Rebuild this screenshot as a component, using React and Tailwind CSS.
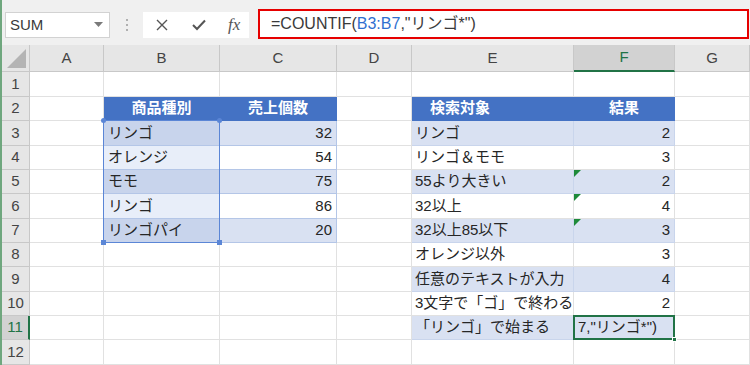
import React from 'react'

const COLS = ['A', 'B', 'C', 'D', 'E', 'F', 'G']
const ROWS = [1, 2, 3, 4, 5, 6, 7, 8, 9, 10, 11, 12]

const left = {
  3: ['リンゴ', '32'],
  4: ['オレンジ', '54'],
  5: ['モモ', '75'],
  6: ['リンゴ', '86'],
  7: ['リンゴパイ', '20'],
}

const right = {
  3: ['リンゴ', '2'],
  4: ['リンゴ＆モモ', '3'],
  5: ['55より大きい', '2'],
  6: ['32以上', '4'],
  7: ['32以上85以下', '3'],
  8: ['オレンジ以外', '3'],
  9: ['任意のテキストが入力', '4'],
  10: ['3文字で「ゴ」で終わる', '2'],
  11: ['「リンゴ」で始まる', '7,"リンゴ*")'],
}

const flagged = [5, 6, 7]

function Cell({ children, className = '', flag }) {
  return (
    <div
      className={
        'relative flex items-center overflow-hidden whitespace-nowrap border-r border-b px-[4px] text-[15px] text-[#262626] ' +
        className
      }
    >
      {flag && (
        <svg className="absolute left-0 top-0" width="7" height="7" viewBox="0 0 7 7">
          <polygon points="0,0 7,0 0,7" fill="#1e8a3a" />
        </svg>
      )}
      {children}
    </div>
  )
}

function renderRow(r) {
  const band = r % 2 === 1
  const cells = []

  // A
  cells.push(<Cell key="A" className="border-[#e1e1e1] bg-white" />)

  // B, C
  if (r === 2) {
    cells.push(
      <Cell key="B" className="justify-center border-[#4472c4] bg-[#4472c4] font-bold text-white">商品種別</Cell>,
      <Cell key="C" className="justify-center border-[#4472c4] bg-[#4472c4] font-bold text-white">売上個数</Cell>
    )
  } else if (left[r]) {
    cells.push(
      <Cell key="B" className={'border-[#b4c6e7] ' + (band ? 'bg-[#c8d4ec]' : 'bg-[#e8eef9]')}>{left[r][0]}</Cell>,
      <Cell key="C" className={'justify-end border-[#b4c6e7] ' + (band ? 'bg-[#d9e1f2]' : 'bg-white')}>{left[r][1]}</Cell>
    )
  } else {
    cells.push(
      <Cell key="B" className="border-[#e1e1e1] bg-white" />,
      <Cell key="C" className="border-[#e1e1e1] bg-white" />
    )
  }

  // D
  cells.push(<Cell key="D" className="border-[#e1e1e1] bg-white" />)

  // E, F
  if (r === 2) {
    cells.push(
      <Cell key="E" className="border-[#4472c4] bg-[#4472c4] pl-[18px] font-bold text-white">検索対象</Cell>,
      <Cell key="F" className="justify-center border-[#4472c4] bg-[#4472c4] font-bold text-white">結果</Cell>
    )
  } else if (right[r]) {
    const bg = band ? 'bg-[#d9e1f2] border-[#c9d5ec]' : 'bg-white border-[#e1e1e1]'
    cells.push(
      <Cell key="E" className={'pl-[3px] ' + bg}>{right[r][0]}</Cell>,
      <Cell
        key="F"
        flag={flagged.includes(r)}
        className={(r === 11 ? 'justify-start ' : 'justify-end ') + bg}
      >
        {right[r][1]}
      </Cell>
    )
  } else {
    cells.push(
      <Cell key="E" className="border-[#e1e1e1] bg-white" />,
      <Cell key="F" className="border-[#e1e1e1] bg-white" />
    )
  }

  // G
  cells.push(<Cell key="G" className="border-[#e1e1e1] bg-white" />)
  return cells
}

export default function App() {
  return (
    <div className="h-[365px] w-[750px] overflow-hidden border-l-2 border-[#6fa77e] bg-[#f0f0f0] font-['Liberation_Sans','Noto_Sans_CJK_JP',sans-serif]">
      {/* formula bar */}
      <div className="flex h-[45px] items-start pl-[3px]">
        <div className="mt-[12px] flex h-[26px] w-[105px] items-center justify-between border border-[#d2d2d2] bg-white pl-[4px] pr-[6px]">
          <span className="text-[15px] text-[#3a3a3a]">SUM</span>
          <svg width="9" height="6" viewBox="0 0 9 6">
            <polygon points="0,0 9,0 4.5,5" fill="#7a7a7a" />
          </svg>
        </div>
        <div className="mt-[19px] ml-[14px] flex w-[6px] flex-col items-center gap-[3px]">
          <span className="h-[2px] w-[2px] bg-[#b0b0b0]" />
          <span className="h-[2px] w-[2px] bg-[#b0b0b0]" />
          <span className="h-[2px] w-[2px] bg-[#b0b0b0]" />
        </div>
        <div className="mt-[12px] ml-[13px] flex h-[26px] w-[106px] items-center bg-white">
          <svg className="ml-[13px]" width="12" height="12" viewBox="0 0 12 12">
            <path d="M1 1 L11 11 M11 1 L1 11" stroke="#555" strokeWidth="1.4" fill="none" />
          </svg>
          <svg className="ml-[24px]" width="14" height="12" viewBox="0 0 14 12">
            <path d="M1 6 L5 10 L13 1.5" stroke="#555" strokeWidth="2" fill="none" />
          </svg>
          <span className="ml-[22px] font-['Liberation_Serif',serif] text-[17px] italic text-[#555]">fx</span>
        </div>
        <div className="mt-[9px] ml-[9px] flex h-[30px] w-[491px] items-center border-2 border-[#e60000] bg-white pl-[11px] text-[16px] text-[#3a3a3a]">
          <span>=COUNTIF(</span>
          <span className="text-[#2f6fd0]">B3:B7</span>
          <span>,"リンゴ*")</span>
        </div>
      </div>

      {/* sheet */}
      <div className="relative grid grid-cols-[28px_74px_116px_117px_75px_162px_101px_75px] grid-rows-[27px_25px_24px_25px_24px_24px_25px_24px_24px_25px_24px_24px_25px] text-[#444]">
        {/* corner */}
        <div className="relative border-r border-b border-[#c8c8c8] bg-[#e6e6e6]">
          <svg className="absolute right-[3px] bottom-[3px]" width="19" height="19" viewBox="0 0 19 19">
            <polygon points="19,0 19,19 0,19" fill="#b4b4b4" />
          </svg>
        </div>
        {COLS.map((c) => (
          <div
            key={c}
            className={
              'flex items-center justify-center border-r text-[15px] ' +
              (c === 'F'
                ? 'border-b-2 border-r-[#c8c8c8] border-b-[#217346] bg-[#d2d2d2] text-[#217346]'
                : 'border-b border-[#c8c8c8] bg-[#e6e6e6]')
            }
          >
            {c}
          </div>
        ))}

        {ROWS.map((r) => (
          <React.Fragment key={r}>
            <div
              className={
                'flex items-center justify-center border-b text-[15px] ' +
                (r === 11
                  ? 'border-r-2 border-r-[#217346] border-b-[#c8c8c8] bg-[#d2d2d2] text-[#217346]'
                  : 'border-r border-[#c8c8c8] bg-[#e6e6e6]')
              }
            >
              {r}
            </div>
            {renderRow(r)}
          </React.Fragment>
        ))}

        {/* selected range B3:B7 */}
        <div className="pointer-events-none absolute left-[101px] top-[75px] h-[123px] w-[117px] border border-[#5b86d6]">
          <span className="absolute -left-[3px] -top-[3px] h-[5px] w-[5px] rounded-full bg-[#5b86d6]" />
          <span className="absolute -right-[3px] -top-[3px] h-[5px] w-[5px] rounded-full bg-[#5b86d6]" />
          <span className="absolute -left-[3px] -bottom-[3px] h-[5px] w-[5px] bg-[#5b86d6]" />
          <span className="absolute -right-[3px] -bottom-[3px] h-[5px] w-[5px] bg-[#5b86d6]" />
        </div>

        {/* active cell F11 */}
        <div className="pointer-events-none absolute left-[571px] top-[270px] h-[25px] w-[102px] border-2 border-[#217346]">
          <span className="absolute -right-[4px] -bottom-[4px] h-[5px] w-[5px] border border-white bg-[#217346]" />
        </div>
      </div>
    </div>
  )
}
